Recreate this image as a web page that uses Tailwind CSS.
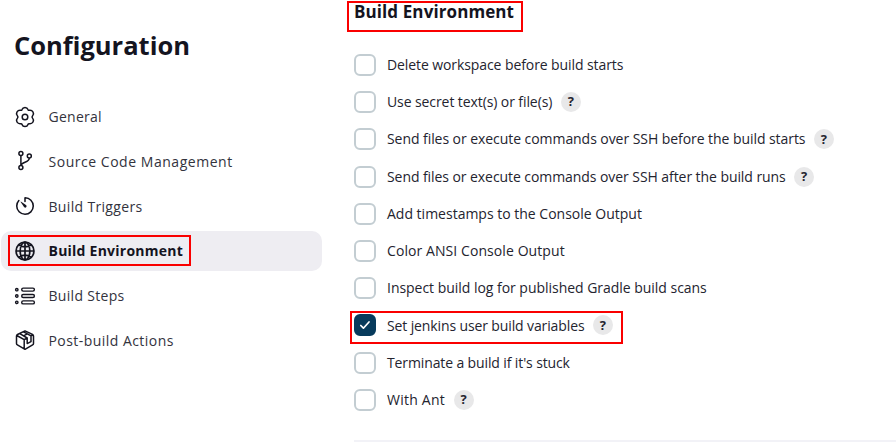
<!DOCTYPE html>
<html lang="en"><head><meta charset="utf-8"><title>Configuration</title>
<script src="https://cdn.jsdelivr.net/npm/@tailwindcss/browser@4"></script></head>
<body class="w-[896px] h-[445px] overflow-hidden bg-white text-[#14141f] font-['Open_Sans','Noto_Sans',sans-serif]">
<div class="relative flex h-[445px]">
<aside class="w-[322px] shrink-0 pt-[27px]">
<h1 class="pl-[14px] text-[25.5px] leading-[36px] font-bold">Configuration</h1>
<nav class="mt-[33.5px] flex flex-col gap-[4.8px] text-[14px] text-[#33333d]">
<a class="flex h-10 items-center gap-[12.5px] pl-[14px]"><svg class="size-[22px]" viewBox="0 0 22 22" fill="none" stroke="#14141f" stroke-width="1.5"><path d="M11 1.6c1.6 0 2.5.6 3 2 .2.5.8.8 1.4.7 1.6-.2 2.8.3 3.6 1.7.8 1.3.7 2.5-.4 3.7-.7.8-.7 1.8 0 2.6 1.1 1.2 1.2 2.4.4 3.7-.8 1.4-2 1.9-3.6 1.700-.6-.1-1.200.2-1.400.7-.5 1.400-1.400 2-3 2s-2.500-.6-3-2c-.2-.5-.8-.8-1.400-.7-1.600.2-2.800-.3-3.600-1.700-.8-1.300-.7-2.500.4-3.700.7-.8.7-1.800 0-2.600C2.300 8.500 2.200 7.300 3 6c.8-1.400 2-1.900 3.600-1.700.6.1 1.200-.2 1.400-.7.500-1.400 1.400-2 3-2z"/><circle cx="11" cy="11" r="2.8"/></svg><span class="tracking-[0.25px]">General</span></a>
<a class="flex h-10 items-center gap-[12.5px] pl-[14px]"><svg class="size-[22px]" viewBox="0 0 22 22" fill="none" stroke="#14141f" stroke-width="1.5"><circle cx="6.900" cy="3.500" r="2"/><circle cx="6.900" cy="17.500" r="2"/><circle cx="15.300" cy="6" r="2"/><path d="M6.900 5.500v10M15.300 8c0 5-7.500 3.300-8.400 7.500"/></svg><span class="tracking-[0.53px]">Source Code Management</span></a>
<a class="flex h-10 items-center gap-[12.5px] pl-[14px]"><svg class="size-[22px]" viewBox="0 0 512 512" fill="none" stroke="#14141f" stroke-width="36" stroke-linecap="round"><path d="M112.910 128A191.850 191.850 0 0064 254c-1.180 106.350 85.650 193.800 192 194 106.200.2 192-85.830 192-192 0-104.540-83.550-189.610-187.500-192a4.360 4.360 0 00-4.500 4.370V152"/><path fill="#14141f" stroke="none" d="M233.380 278.630l-79-113a8.130 8.130 0 0111.320-11.320l113 79a32.500 32.500 0 01-37.250 53.260 33.210 33.210 0 01-8.070-7.940z"/></svg><span class="tracking-[0.33px]">Build Triggers</span></a>
<a class="ml-px flex h-10 items-center gap-[12.5px] rounded-[10px] bg-[#eeedf2] pl-[13px] font-bold text-[#14141f]"><svg class="size-[22px]" viewBox="0 0 512 512" fill="none" stroke="#14141f" stroke-width="40"><circle cx="256" cy="256" r="208"/><path d="M256 48c-58.070 0-112.670 93.130-112.670 208S197.930 464 256 464s112.670-93.130 112.670-208S314.070 48 256 48zM117.330 117.330c38.240 27.150 86.380 43.340 138.670 43.340s100.430-16.190 138.670-43.340M394.670 394.670c-38.240-27.150-86.380-43.340-138.670-43.340s-100.430 16.190-138.670 43.340M256 48v416M464 256H48"/></svg><span class="tracking-[0.24px]">Build Environment</span></a>
<a class="flex h-10 items-center gap-[12.5px] pl-[14px]"><svg class="size-[22px]" viewBox="0 0 22 22" fill="none" stroke="#14141f" stroke-width="1.400"><circle cx="2.800" cy="4.700" r="1.200"/><circle cx="2.800" cy="11" r="1.200"/><circle cx="2.800" cy="17.300" r="1.200"/><rect x="7.700" y="3.100" width="12.700" height="3" rx="1.500"/><rect x="7.700" y="9.500" width="12.700" height="3" rx="1.500"/><rect x="7.700" y="15.900" width="12.700" height="3" rx="1.500"/></svg><span class="tracking-[0.3px]">Build Steps</span></a>
<a class="flex h-10 items-center gap-[12.5px] pl-[14px]"><svg class="size-[22px]" viewBox="0 0 22 22" fill="none" stroke="#14141f" stroke-width="1.500" stroke-linejoin="round"><path d="M11 1.900l7.500 3.500q1 .5 1 1.500v7.500q0 .9-.9 1.400L11 20.300l-7.600-4.400q-.9-.5-.9-1.400V7q0-1 1-1.500zM2.800 6.500l7.400 4.200v9M10.200 10.700l3-1.700M17 6.800l2.200-.8M5.800 4.700l7.400 4.300v5.600l3.800-2V6.800L9.600 2.900M9.500 6.800l3.800-2"/></svg><span class="tracking-[0.45px]">Post-build Actions</span></a>
</nav></aside>
<main class="min-w-0 flex-1 pl-[32px]">
<h2 class="h-[46.3px] text-[17px] leading-6 font-bold tracking-[0.1px]">Build Environment</h2>
<div class="flex flex-col text-[14px] text-[#24242f]" id="options"></div>
<hr class="mt-[21.200px] border-t-2 border-[#f2f2f7]">
</main>
<div class="absolute left-[347px] top-[1px] h-[31px] w-[176px] border-2 border-[#fa0000]"></div>
<div class="absolute left-[8px] top-[235px] h-[31px] w-[183px] border-2 border-[#fa0000]"></div>
<div class="absolute left-[350px] top-[311px] h-[33px] w-[273px] border-2 border-[#fa0000]"></div>
</div>
<script>
// label, letter-spacing class, has help button, checked
const rows=[
["Delete workspace before build starts","tracking-[-0.09px]",0],
["Use secret text(s) or file(s)","tracking-[-0.09px]",1],
["Send files or execute commands over SSH before the build starts","tracking-[-0.06px]",1],
["Send files or execute commands over SSH after the build runs","tracking-[-0.07px]",1],
["Add timestamps to the Console Output","tracking-[0px]",0],
["Color ANSI Console Output","tracking-[0.08px]",0],
["Inspect build log for published Gradle build scans","tracking-[-0.03px]",0],
["Set jenkins user build variables","tracking-[-0.12px]",1,1],
["Terminate a build if it's stuck","tracking-[-0.12px]",0],
["With Ant","tracking-[0.24px]",1]];
document.getElementById('options').innerHTML=rows.map(([t,k,h,c])=>`<label class="flex h-[37.220px] items-center"><span class="mr-[11px] flex size-[22px] items-center justify-center rounded-[6px] border-2 ${c?'border-[#073b5c] bg-[#073b5c]':'border-[#c3cdd2]'}">${c?'<svg class="size-3" viewBox="0 0 12 12" fill="none" stroke="white" stroke-width="1.700" stroke-linecap="round" stroke-linejoin="round"><path d="M1.800 6.500l2.600 2.700L10 3"/></svg>':''}</span><span class="pb-[0.8px] ${k}">${t}</span>${h?'<span class="ml-[8.500px] flex size-5 items-center justify-center rounded-full bg-[#e8e8e9] text-[13px] font-bold">?</span>':''}</label>`).join('');
</script>
</body></html>
